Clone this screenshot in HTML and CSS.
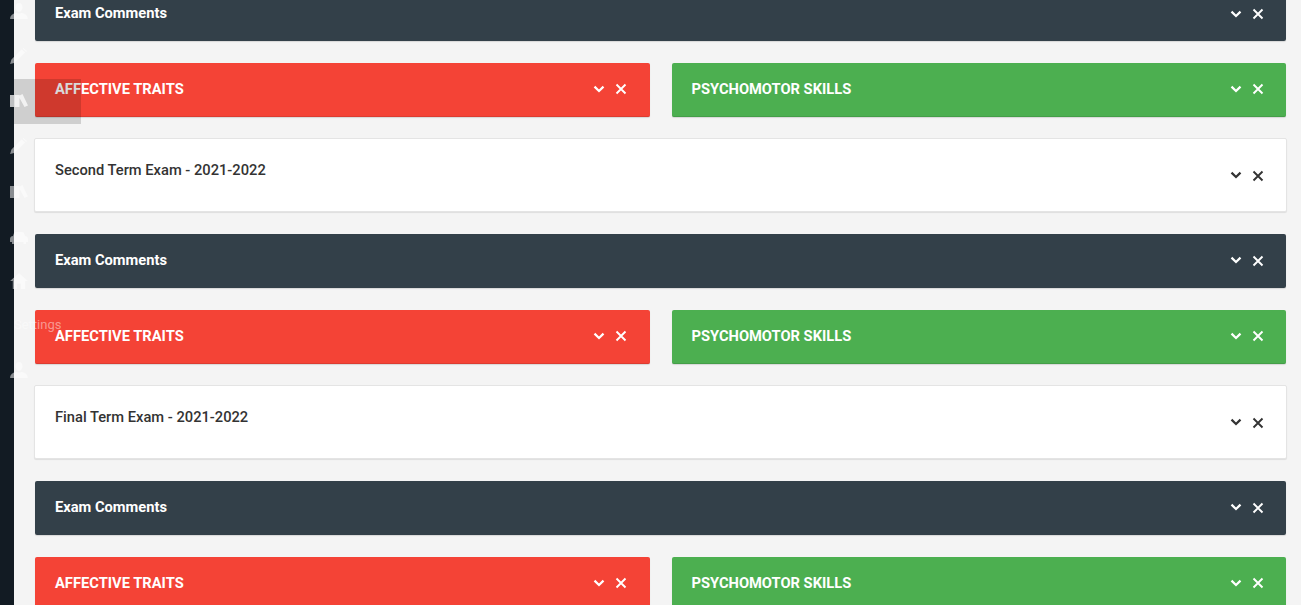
FILE: index.html
```html
<!DOCTYPE html>
<html lang="en">
<head>
<meta charset="utf-8">
<title>Exam Report</title>
<link rel="stylesheet" href="styles.css">
</head>
<body>
<svg class="defs" width="0" height="0" aria-hidden="true">
  <symbol id="chev" viewBox="0 0 12 8"><path d="M1.500 1.600 6 6 10.500 1.600" fill="none" stroke="currentColor" stroke-width="2.200"/></symbol>
  <symbol id="cross" viewBox="0 0 12 12"><path d="M1.500 1.500 10.500 10.500M10.500 1.500 1.500 10.500" fill="none" stroke="currentColor" stroke-width="1.900"/></symbol>
  <symbol id="user" viewBox="0 0 20 18"><path d="M10 0c2.600 0 4 2 4 4.500S12.600 10 10 10 6 7 6 4.500 7.400 0 10 0ZM0 18c0-4 3-6 7-7 1.800 1 4.200 1 6 0 4 1 7 3 7 7Z"/></symbol>
  <symbol id="pencil" viewBox="0 0 20 18"><path d="M0 18l1.500-5L13 1.500 17 5 5.500 16.500ZM14 .5l1-.5 4 3.500-1 1Z"/></symbol>
  <symbol id="books" viewBox="0 0 18 13"><path d="M0 1h4.600v12H0ZM5 1h4.500v12H5ZM9.500 1.500 12.500 0 18 11.500 14.500 13 9.500 4Z"/></symbol>
  <symbol id="car" viewBox="0 0 18 12"><path d="M3 4l1-3C4.300.3 4.800 0 5.500 0h7c.7 0 1.200.3 1.500 1l1 3c1.500.2 3 1.200 3 2.800V10h-2v2h-2.500v-2h-9v2H2v-2H0V6.800C0 5.200 1.500 4.200 3 4Z"/></symbol>
  <symbol id="home" viewBox="0 0 20 18"><path d="M10 0l10 9h-3v9h-5v-6H8v6H3V9H0Z"/></symbol>
</svg>

<aside class="rail">
  <svg class="rail-icon ri-1"><use href="#user"/></svg>
  <svg class="rail-icon ri-2"><use href="#pencil"/></svg>
  <div class="rail-active"></div>
  <svg class="rail-icon ri-3"><use href="#books"/></svg>
  <svg class="rail-icon ri-4"><use href="#pencil"/></svg>
  <svg class="rail-icon ri-5"><use href="#books"/></svg>
  <svg class="rail-icon ri-6"><use href="#car"/></svg>
  <svg class="rail-icon ri-7"><use href="#home"/></svg>
  <span class="rail-label">Settings</span>
  <svg class="rail-icon ri-8"><use href="#user"/></svg>
</aside>

<main class="content">
  <section class="panel dark"><h3>Exam Comments</h3><div class="tools"><svg class="chev"><use href="#chev"/></svg><svg class="cross"><use href="#cross"/></svg></div></section>
  <div class="pair">
    <section class="panel red"><h3>AFFECTIVE TRAITS</h3><div class="tools"><svg class="chev"><use href="#chev"/></svg><svg class="cross"><use href="#cross"/></svg></div></section>
    <section class="panel green"><h3>PSYCHOMOTOR SKILLS</h3><div class="tools"><svg class="chev"><use href="#chev"/></svg><svg class="cross"><use href="#cross"/></svg></div></section>
  </div>
  <section class="panel white"><h3>Second Term Exam - 2021-2022</h3><div class="tools"><svg class="chev"><use href="#chev"/></svg><svg class="cross"><use href="#cross"/></svg></div></section>
  <section class="panel dark"><h3>Exam Comments</h3><div class="tools"><svg class="chev"><use href="#chev"/></svg><svg class="cross"><use href="#cross"/></svg></div></section>
  <div class="pair">
    <section class="panel red"><h3>AFFECTIVE TRAITS</h3><div class="tools"><svg class="chev"><use href="#chev"/></svg><svg class="cross"><use href="#cross"/></svg></div></section>
    <section class="panel green"><h3>PSYCHOMOTOR SKILLS</h3><div class="tools"><svg class="chev"><use href="#chev"/></svg><svg class="cross"><use href="#cross"/></svg></div></section>
  </div>
  <section class="panel white"><h3>Final Term Exam - 2021-2022</h3><div class="tools"><svg class="chev"><use href="#chev"/></svg><svg class="cross"><use href="#cross"/></svg></div></section>
  <section class="panel dark"><h3>Exam Comments</h3><div class="tools"><svg class="chev"><use href="#chev"/></svg><svg class="cross"><use href="#cross"/></svg></div></section>
  <div class="pair">
    <section class="panel red"><h3>AFFECTIVE TRAITS</h3><div class="tools"><svg class="chev"><use href="#chev"/></svg><svg class="cross"><use href="#cross"/></svg></div></section>
    <section class="panel green"><h3>PSYCHOMOTOR SKILLS</h3><div class="tools"><svg class="chev"><use href="#chev"/></svg><svg class="cross"><use href="#cross"/></svg></div></section>
  </div>
</main>
</body>
</html>
```

FILE: styles.css
```css
* { box-sizing: border-box; }
html, body { margin: 0; height: 100%; overflow: hidden; }
body { background: #f4f4f4; font-family: Roboto, "Liberation Sans", sans-serif; color: #333; }
.defs { position: absolute; }

.rail { position: absolute; left: 0; top: 0; bottom: 0; width: 14px; background: #121b23; }
.rail-active { position: absolute; left: 14px; top: 79px; width: 67px; height: 45px; background: rgba(0,0,0,.15); }
.rail-icon { position: absolute; width: 18px; height: 16px; left: 10px; fill: rgba(255,255,255,.5); }
.ri-1 { top: 3px; }
.ri-2 { top: 48px; }
.ri-3 { top: 94px; height: 13px; fill: rgba(255,255,255,.72); }
.ri-4 { top: 138px; }
.ri-5 { top: 185px; height: 13px; }
.ri-6 { top: 232px; height: 12px; }
.ri-7 { top: 273px; }
.ri-8 { top: 362px; }
.rail-label { position: absolute; left: 14px; top: 316px; font-size: 13px; line-height: 18px; color: rgba(255,255,255,.45); }

.content { display: flex; flex-direction: column; gap: 21.67px; margin-top: -13px; padding: 0 15px 0 35px; }
.pair { display: grid; grid-template-columns: 1fr 1fr; gap: 22px; }

.panel { display: flex; justify-content: space-between; height: 54px; padding: 0 20px; border-radius: 2px; box-shadow: 0 1px 1px rgba(0,0,0,.12); }
.panel h3 { margin: 0; font-size: 14.7px; line-height: 52px; font-weight: 700; color: #fff; white-space: nowrap; }
.tools { display: flex; align-items: center; gap: 10px; margin-right: 2px; color: #fff; padding-bottom: 1px; }
.chev { width: 12px; height: 8px; }
.cross { width: 12px; height: 12px; margin-top: 1px; }

.dark { background: #334049; }
.red { background: #f44336; border-bottom: 1px solid #dc3c31; }
.red .tools { margin-right: 3px; }
.green { background: #4caf50; border-bottom: 1px solid #449e48; }
.white { height: 74px; margin: 0 -1px; background: #fff; border: 1px solid #e4e4e4; box-shadow: 0 1px 1px rgba(0,0,0,.09); }
.white h3 { color: #333; font-weight: 500; line-height: 62px; }
.white .tools { color: #333; padding-bottom: 0; margin-right: 2px; }
```
